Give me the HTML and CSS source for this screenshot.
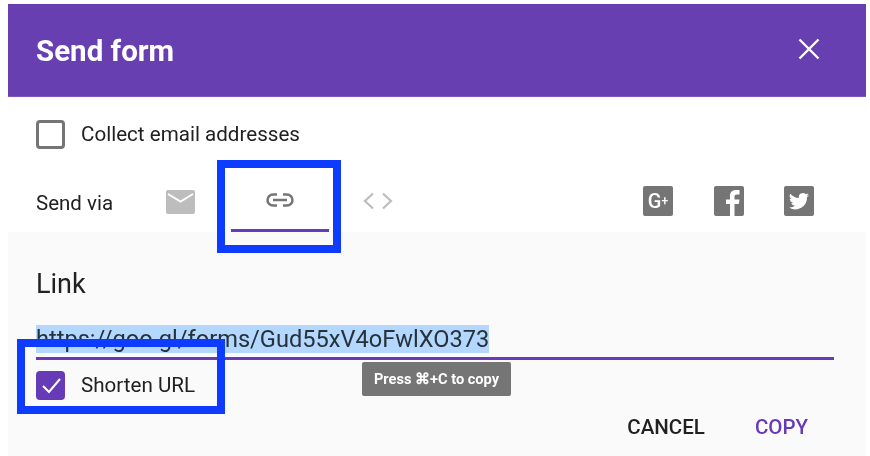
FILE: index.html
```html
<!DOCTYPE html>
<html lang="en">
<head>
<meta charset="utf-8">
<title>Send form</title>
<link rel="stylesheet" href="styles.css">
</head>
<body>
<div class="dialog">
  <header class="header">
    <h1 class="title">Send form</h1>
    <svg class="close" viewBox="0 0 22 22" width="22" height="22"><path d="M1.5 1.5 20.5 20.5M20.5 1.5 1.5 20.5" fill="none" stroke="#fff" stroke-width="2.4"/></svg>
  </header>
  <section class="top">
    <div class="check-row">
      <span class="box"></span>
      <span class="check-label">Collect email addresses</span>
    </div>
    <div class="via-row">
      <span class="via-label">Send via</span>
      <svg class="mail" viewBox="0 0 29 24" width="29" height="24"><rect width="29" height="24" rx="2" fill="#bdbdbd"/><path d="M2 4 14.500 11.500 27 4" fill="none" stroke="#fff" stroke-width="2"/></svg>
      <div class="tab">
        <svg viewBox="0 0 30 16" width="30" height="16"><path d="M12 2.500H8a5.500 5.500 0 0 0 0 11h4M18 2.500h4a5.500 5.500 0 0 1 0 11h-4M8 8h14" fill="none" stroke="#757575" stroke-width="2.500"/></svg>
      </div>
      <svg class="code" viewBox="0 0 30 18" width="30" height="18"><path d="M10 1.500 2 9l8 7.500M20 1.500 28 9l-8 7.500" fill="none" stroke="#bdbdbd" stroke-width="2.200"/></svg>
      <div class="socials">
        <span class="social social-g">G<small>+</small></span>
        <span class="social">
          <svg viewBox="0 0 30 30" width="30" height="30"><path fill="#fff" d="M16 30V18h-4v-4.500h4v-3.500c0-4 2.500-6 6-6h3.500v4.500H23c-1.800 0-2.500.7-2.500 2.300v2.700h5l-.7 4.500h-4.300V30z"/></svg>
        </span>
        <span class="social">
          <svg viewBox="0 0 24 24" width="24" height="24"><path fill="#fff" d="M22 5.900c-.7.300-1.500.500-2.300.600.800-.500 1.500-1.300 1.800-2.200-.8.500-1.700.800-2.600 1a4.100 4.100 0 0 0-7 3.700C8.500 8.800 5.500 7.200 3.400 4.700a4.100 4.100 0 0 0 1.300 5.500c-.7 0-1.300-.2-1.900-.5 0 2 1.400 3.700 3.300 4.100-.6.200-1.200.2-1.800.1.500 1.600 2 2.800 3.800 2.800A8.300 8.300 0 0 1 2 18.400 11.600 11.600 0 0 0 20 8.100c.8-.6 1.500-1.300 2-2.200z"/></svg>
        </span>
      </div>
    </div>
  </section>
  <section class="panel">
    <h2 class="link-title">Link</h2>
    <div class="url-field"><span class="url">https://goo.gl/forms/Gud55xV4oFwlXO373</span></div>
    <div class="check-row short-row">
      <span class="box box-on">
        <svg viewBox="0 0 29 29" width="29" height="29"><path d="M7 15l6 6L24 8" fill="none" stroke="#fff" stroke-width="2"/></svg>
      </span>
      <span class="check-label">Shorten URL</span>
    </div>
    <div class="actions">
      <span class="action">CANCEL</span>
      <span class="action action-copy">COPY</span>
    </div>
    <div class="tooltip">Press ⌘+C to copy</div>
  </section>
  <div class="mark mark-tab"></div>
  <div class="mark mark-short"></div>
</div>
</body>
</html>
```
FILE: styles.css
```css
* { box-sizing: border-box; }
html, body { margin: 0; height: 456px; overflow: hidden; background: #fff; }
body { padding: 4px 4px 0 8px; font-family: Roboto, "Liberation Sans", sans-serif; color: #212121; }
.dialog { position: relative; height: 452px; display: flex; flex-direction: column; filter: blur(0.5px); }
.header { height: 93px; flex: none; background: #673fb0; border-bottom: 1px solid #7e57c2; display: flex; align-items: center; justify-content: space-between; padding: 0 46px 2px 28px; }
.title { margin: 0; font-size: 29.500px; font-weight: 700; line-height: 36px; padding-top: 4px; color: #fff; }
.close { display: block; }
.top { height: 135px; flex: none; background: #fff; padding: 23px 32px 0 28px; }
.check-row { display: flex; align-items: center; gap: 16px; }
.box { width: 29px; height: 29px; flex: none; border: 3px solid #757575; border-radius: 4px; }
.box-on { border: 0; background: #673ab7; }
.box-on svg { display: block; }
.check-label { font-size: 20.600px; line-height: 26px; padding-bottom: 2px; color: #212121; }
.via-row { display: flex; align-items: center; height: 62px; margin-top: 21px; }
.via-label { font-size: 20.500px; width: 130px; margin-top: 3px; }
.tab { width: 98px; height: 62px; margin: 0 34px 0 36px; border-bottom: 3px solid #673ab7; display: flex; align-items: center; justify-content: center; padding-top: 1px; flex: none; }
.mail { flex: none; display: block; margin-top: 2px; }
.code { flex: none; display: block; }
.socials { margin-left: auto; display: flex; gap: 40.500px; padding-right: 20px; }
.social { width: 30px; height: 30px; background: #757575; border-radius: 2px; color: #fff; display: flex; align-items: center; justify-content: center; font-weight: 500; font-size: 20px; overflow: hidden; }
.social svg { display: block; }
.social small { font-size: 12px; }
.panel { flex: 1; background: #fafafa; padding: 34px 32px 0 28px; position: relative; }
.link-title { margin: 0; font-size: 27px; font-weight: 400; line-height: 34px; padding-top: 1px; height: 35px; }
.url-field { margin-top: 24px; height: 35px; border-bottom: 3px solid #673ab7; }
.url { display: inline-block; font-size: 23.600px; line-height: 28px; height: 28px; background: #b3d7ff; color: #263238; }
.short-row { margin-top: 11px; }
.actions { display: flex; justify-content: flex-end; gap: 50px; padding-right: 26px; margin-top: 15px; }
.action { font-size: 20.500px; font-weight: 500; color: #212121; }
.action-copy { color: #673ab7; }
.tooltip { position: absolute; left: 354px; top: 130px; width: 149px; height: 34px; background: #757575; border-radius: 2px; color: #fff; font-size: 14.600px; font-weight: 700; display: flex; align-items: center; justify-content: center; }
.mark { position: absolute; border: 8px solid #0d3bff; }
.mark-tab { left: 209px; top: 156px; width: 124px; height: 93px; }
.mark-short { left: 9px; top: 335px; width: 208px; height: 75px; }
```
